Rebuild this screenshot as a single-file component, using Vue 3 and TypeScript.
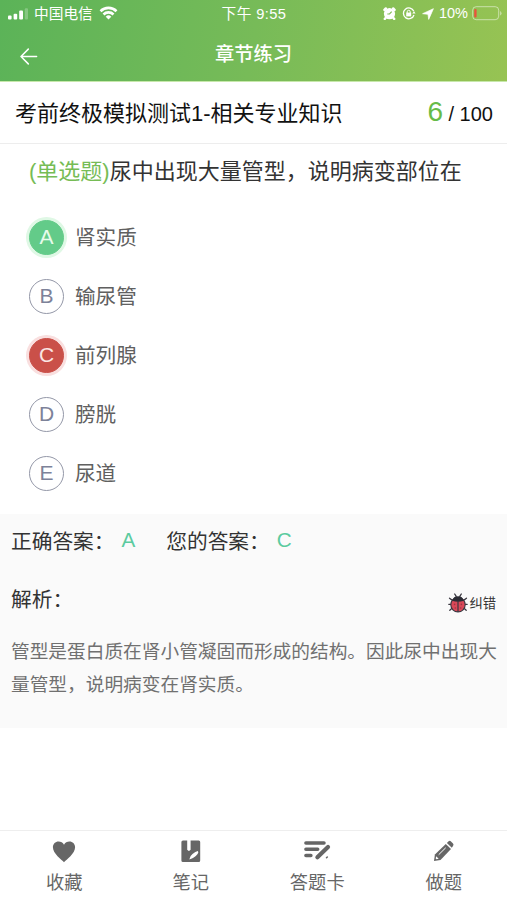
<script setup lang="ts">
type OptionState = 'plain' | 'right' | 'wrong'

interface AnswerOption {
  key: string
  text: string
  state: OptionState
}

const options: AnswerOption[] = [
  { key: 'A', text: '肾实质', state: 'right' },
  { key: 'B', text: '输尿管', state: 'plain' },
  { key: 'C', text: '前列腺', state: 'wrong' },
  { key: 'D', text: '膀胱', state: 'plain' },
  { key: 'E', text: '尿道', state: 'plain' },
]

const tabs: { icon: string; label: string }[] = [
  { icon: 'heart', label: '收藏' },
  { icon: 'note', label: '笔记' },
  { icon: 'card', label: '答题卡' },
  { icon: 'pencil', label: '做题' },
]
</script>

<template>
  <div class="page">
    <header class="top">
      <div class="status">
        <div class="status-left">
          <svg class="signal" width="20" height="12" viewBox="0 0 20 12" fill="#fff">
            <rect x="0" y="7.6" width="3.6" height="3.8" rx="1" />
            <rect x="5.6" y="5.8" width="3.6" height="5.6" rx="1" />
            <rect x="11.2" y="2.6" width="3.8" height="8.8" rx="1" />
            <rect x="16.8" y="0.2" width="3.2" height="11.2" rx="1" opacity="0.25" />
          </svg>
          <span class="carrier">中国电信</span>
          <svg class="wifi" width="19" height="14" viewBox="0 0 18 14" fill="none" stroke="#fff" stroke-width="2.6">
            <path d="M1 5.2a11.4 11.4 0 0 1 16 0" />
            <path d="M4 8.5a7 7 0 0 1 10 0" />
            <path d="M9 13.6 6.2 10.7a4 4 0 0 1 5.6 0z" fill="#fff" stroke="none" />
          </svg>
        </div>
        <span class="clock">下午 9:55</span>
        <div class="status-right">
          <svg width="13" height="13" viewBox="0 0 13 13">
            <circle cx="6.5" cy="6.700" r="5.600" fill="#fff" />
            <path d="M1.400 2.800 2.800 1.400M10.200 1.400l1.400 1.400M2.600 11l-.8.900M10.400 11l.8.900" stroke="#fff" stroke-width="2.400" stroke-linecap="round" />
            <path d="M8.700 4.600 6.500 7H4.300" fill="none" stroke="#83bf59" stroke-width="1.200" />
          </svg>
          <svg class="lock" width="14" height="13" viewBox="0 0 14 13" fill="none" stroke="#fff" stroke-width="1.3">
            <path d="M11.8 4.2A5.4 5.4 0 1 0 12 8" />
            <path d="m10.2 6.6 3.3-.1-1.4-2.2z" fill="#fff" stroke="none" />
            <rect x="4.2" y="5.6" width="5" height="3.8" fill="#fff" stroke="none" />
            <path d="M5.2 6V4.8a1.5 1.5 0 0 1 3 0V6" stroke-width="1" />
          </svg>
          <svg class="loc" width="12" height="12" viewBox="0 0 12 12" fill="#fff" stroke="#fff" stroke-width=".7" stroke-linejoin="round">
            <path d="M11.4.7 6.7 11.4 6 6.3.6 5.700z" />
          </svg>
          <span class="percent">10%</span>
          <svg class="battery" width="30" height="15" viewBox="0 0 30 15">
            <rect x=".7" y=".7" width="26" height="13" rx="3.500" fill="none" stroke="#fff" stroke-opacity=".5" stroke-width="1" />
            <rect x="2.200" y="3" width="2.400" height="8.400" rx="1" fill="#e8533c" />
            <path d="M28.100 5v4.600q1.400-.7 1.400-2.300T28.100 5z" fill="#fff" opacity=".5" />
          </svg>
        </div>
      </div>
      <div class="nav">
        <svg class="back" width="18" height="17" viewBox="0 0 18 17" fill="none" stroke="#fff" stroke-width="1.500" stroke-linecap="round" stroke-linejoin="round">
          <path d="M16.600 8.500H1.200M8.300 1.100 1 8.500l7.300 7.400" />
        </svg>
        <h1 class="nav-title">章节练习</h1>
      </div>
    </header>

    <section class="paper">
      <span class="paper-name">考前终极模拟测试1-相关专业知识</span>
      <span class="progress"><span class="current">6</span> / 100</span>
    </section>

    <main class="question">
      <p class="stem"><span class="kind">(单选题)</span>尿中出现大量管型，说明病变部位在</p>
      <ul class="options">
        <li v-for="o in options" :key="o.key" class="option">
          <span class="badge" :class="o.state">{{ o.key }}</span>
          <span class="option-text">{{ o.text }}</span>
        </li>
      </ul>
    </main>

    <section class="analysis">
      <div class="answers">
        <span class="answer-label">正确答案：</span><span class="letter first">A</span>
        <span class="answer-label">您的答案：</span><span class="letter">C</span>
      </div>
      <div class="analysis-head">
        <span class="head-label">解析：</span>
        <span class="report">
          <svg width="20" height="20" viewBox="0 0 20 20">
            <path d="M6.700 1 8.200 3.400M13.300 1 11.800 3.400M1.500 5.200l3.300 2.400M18.500 5.200l-3.300 2.400M.8 11.300h3.300M19.200 11.300h-3.300M1.800 17.200l3-2.600M18.200 17.200l-3-2.600" stroke="#393740" stroke-width="1.300" fill="none" stroke-linecap="round" />
            <circle cx="10" cy="11.700" r="7.200" fill="#d94858" stroke="#393740" stroke-width="1.100" />
            <path d="M4.200 7.800a6 6 0 0 1 11.600 0q-5.800 2-11.600 0z" fill="#2c2c34" />
            <path d="M10 8v10.700" stroke="#393740" stroke-width="1.200" />
            <g fill="#9c3544">
              <circle cx="6.600" cy="11.400" r=".8" /><circle cx="13.400" cy="11.400" r=".8" />
              <circle cx="7.300" cy="15" r=".8" /><circle cx="12.700" cy="15" r=".8" />
            </g>
          </svg>
          <span>纠错</span>
        </span>
      </div>
      <p class="explain">管型是蛋白质在肾小管凝固而形成的结构。因此尿中出现大量管型，说明病变在肾实质。</p>
    </section>

    <footer class="tabs">
      <div v-for="t in tabs" :key="t.icon" class="tab">
        <svg v-if="t.icon === 'heart'" width="26" height="24" viewBox="0 0 26 24" fill="#666">
          <path d="M13 23.200C10.600 20.700 1.900 14.600 1.900 8.300 1.900 4.900 4.500 2.500 7.500 2.500c2.400 0 4.400 1.200 5.500 3.200 1.100-2 3.100-3.200 5.500-3.200 3 0 5.600 2.400 5.600 5.800 0 6.300-8.700 12.400-11.100 14.900z" />
        </svg>
        <svg v-else-if="t.icon === 'note'" width="26" height="24" viewBox="0 0 26 24">
          <path d="M5 1.500h4.200v9.300q1.700 2.200 3.400 0V1.500h8.100q1.500 0 1.500 1.500v18.500q0 1.500-1.500 1.500H5q-1.600 0-1.600-1.500V3Q3.400 1.500 5 1.500z" fill="#666" />
          <path d="M11.300 20.600q.2-3.400 3.200-5.600 3-2.700 5.300-3 1.200.8-.2 3-1.800 2.700-4.600 4-1.700.5-3.700 1.600z" fill="#fff" />
        </svg>
        <svg v-else-if="t.icon === 'card'" width="28" height="24" viewBox="0 0 28 24" fill="none" stroke="#666" stroke-width="3.500" stroke-linecap="round">
          <path d="M2.900 3.900h18.100M2.900 10.200h11.800M2.900 16.500h5" />
          <path d="M25 7.900 14.400 18.300" stroke-width="4.200" />
          <path d="m23.500 18.800.8-.8" stroke-width="1.500" />
        </svg>
        <svg v-else width="26" height="24" viewBox="0 0 26 24">
          <path d="m3 22 .9-6.600L14.800 4.900l5.200 5.200L9.500 20.900z" fill="#666" />
          <path d="m15.900 3.900 1.700-1.600q1.200-1 2.400.1l2 2.100q1.100 1.200 0 2.400l-1.200 1.900z" fill="#666" />
          <path d="m7.700 15.700 7-6.900" stroke="#fff" stroke-width="1" />
          <path d="m5.200 17.300 2.500 2.500-2.300.5-.7-.7z" fill="#fff" />
        </svg>
        <span class="tab-label">{{ t.label }}</span>
      </div>
    </footer>
  </div>
</template>

<style>
body {
  background: #fff;
}
</style>

<style scoped>
.page {
  display: flex;
  flex-direction: column;
  width: 100%;
  height: 900px;
  overflow: hidden;
  background: #fff;
  color: #333;
  font-family: "Liberation Sans", "Noto Sans CJK SC", sans-serif;
  white-space: nowrap;
}
.top {
  box-sizing: border-box;
  height: 82px;
  flex: none;
  border-bottom: 1px solid #c7e8ab;
  background: linear-gradient(100deg, #5bb358 0%, #77bb58 50%, #97c353 100%);
  color: #fff;
}
.status {
  display: grid;
  grid-template-columns: 1fr auto 1fr;
  align-items: center;
  height: 27px;
  padding: 0 5px 0 8px;
  font-size: 14.5px;
}
.status-left,
.status-right {
  display: flex;
  align-items: center;
}
.status-right {
  justify-content: flex-end;
}
.carrier {
  margin: 0 6px;
  padding-bottom: 2px;
  font-size: 14.7px;
}
.wifi {
  margin-bottom: 2px;
}
.clock {
  padding: 0 2px 3px 0;
  font-size: 14.7px;
  letter-spacing: 0.4px;
}
.lock {
  margin-left: 6px;
}
.loc {
  margin-left: 6px;
}
.percent {
  margin: 0 4px 0 5px;
  padding-bottom: 1px;
}
.nav {
  display: grid;
  grid-template-columns: 1fr auto 1fr;
  align-items: center;
  height: 54px;
  padding: 0 20px;
}
.back {
  margin-top: 4px;
}
.nav-title {
  margin: 1px 0 0;
  font-size: 19.3px;
  font-weight: 500;
  line-height: 54px;
}
.paper {
  display: flex;
  align-items: center;
  justify-content: space-between;
  box-sizing: border-box;
  height: 62px;
  flex: none;
  padding: 0 14px 0 15px;
  border-bottom: 1px solid #ededed;
  color: #111;
}
.paper-name {
  padding-bottom: 3px;
  font-size: 22px;
}
.progress {
  padding-bottom: 2px;
  font-size: 20px;
}
.current {
  color: #67bb48;
  font-size: 28px;
}
.question {
  height: 370px;
  flex: none;
}
.stem {
  margin: 0;
  padding: 11px 29px 0;
  font-size: 22px;
  line-height: 34px;
}
.kind {
  color: #76bc55;
}
.options {
  margin: 19px 0 0;
  padding: 0 0 0 29px;
  list-style: none;
}
.option {
  display: flex;
  align-items: center;
  gap: 11px;
  height: 59px;
  color: #606060;
  font-size: 20.6px;
}
.option-text {
  padding-bottom: 3px;
}
.badge {
  box-sizing: border-box;
  width: 35px;
  height: 35px;
  border: 1.5px solid #9498a8;
  border-radius: 50%;
  color: #7d8299;
  font-size: 21px;
  line-height: 32px;
  text-align: center;
}
.badge.right {
  border-color: #63cb89;
  background: #63cb89;
  box-shadow: 0 0 0 3px #dff8e5;
  color: #e7fbeb;
}
.badge.wrong {
  border-color: #ca5049;
  background: #ca5049;
  box-shadow: 0 0 0 3px #f9dfdf;
  color: #fae6e4;
}
.analysis {
  box-sizing: border-box;
  height: 214px;
  flex: none;
  padding: 0 11px;
  background: #fafafa;
}
.answers {
  display: flex;
  align-items: center;
  box-sizing: border-box;
  height: 54px;
  padding-bottom: 2px;
  font-size: 20.7px;
}
.letter {
  margin-left: 7px;
  color: #5bcb9f;
}
.letter.first {
  margin-right: 31px;
}
.analysis-head {
  display: flex;
  align-items: center;
  justify-content: space-between;
  height: 64px;
  font-size: 20.7px;
}
.head-label {
  padding-bottom: 4px;
}
.report {
  display: flex;
  align-items: center;
  gap: 1px;
  padding-top: 5px;
  font-size: 13.3px;
}
.explain {
  margin: 3px -5px 0 0;
  color: #707070;
  font-size: 18.7px;
  line-height: 33px;
  white-space: normal;
}
.tabs {
  display: grid;
  grid-template-columns: repeat(4, 1fr);
  box-sizing: border-box;
  height: 70px;
  margin-top: auto;
  padding-left: 1px;
  border-top: 1px solid #eeeeee;
}
.tab {
  display: flex;
  flex-direction: column;
  align-items: center;
  padding-top: 8px;
  color: #666;
}
.tab-label {
  margin-top: 7px;
  font-size: 18.3px;
  line-height: 26px;
}
</style>
